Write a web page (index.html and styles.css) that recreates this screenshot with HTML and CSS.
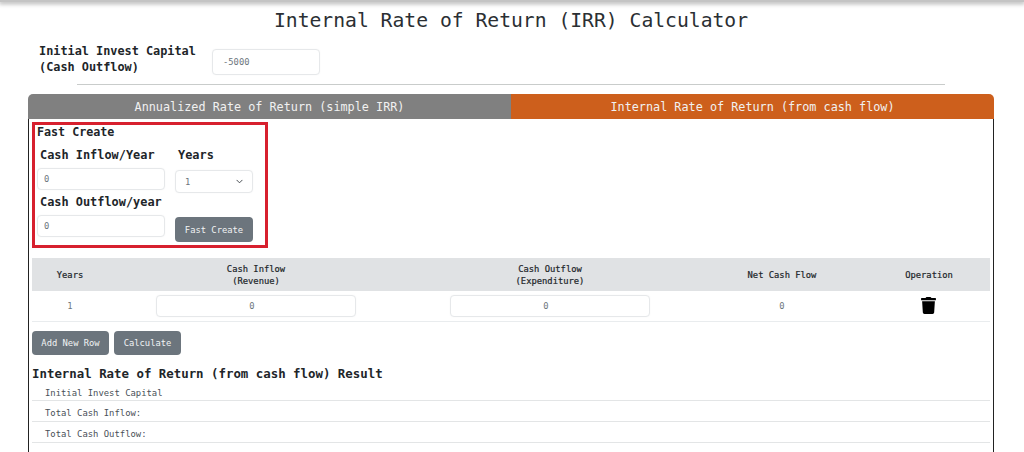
FILE: index.html
```html
<!DOCTYPE html>
<html lang="en">
<head>
<meta charset="utf-8">
<title>IRR Calculator</title>
<link rel="stylesheet" href="styles.css">
</head>
<body>
<div class="topbar"></div>
<h1 class="title">Internal Rate of Return (IRR) Calculator</h1>
<div class="capital">
  <label class="capital-label">Initial Invest Capital<br>(Cash Outflow)</label>
  <input class="field capital-input" type="text" value="-5000">
</div>
<hr class="divider">
<main class="panel">
  <div class="tabs">
    <div class="tab tab-grey">Annualized Rate of Return (simple IRR)</div>
    <div class="tab tab-orange">Internal Rate of Return (from cash flow)</div>
  </div>
  <div class="panel-body">
    <section class="fast">
      <h2 class="fast-title">Fast Create</h2>
      <div class="fast-grid">
        <label class="fast-label">Cash Inflow/Year</label>
        <label class="fast-label">Years</label>
        <input class="field fast-input" type="text" value="0">
        <div class="field fast-select"><span>1</span>
          <svg class="caret" viewBox="0 0 16 16"><path d="M2 5l6 6 6-6" fill="none" stroke="#343a40" stroke-width="2" stroke-linecap="round" stroke-linejoin="round"/></svg>
        </div>
        <label class="fast-label">Cash Outflow/year</label>
        <span></span>
        <input class="field fast-input" type="text" value="0">
        <button class="btn fast-btn" type="button">Fast Create</button>
      </div>
    </section>
    <table class="flow">
      <colgroup>
        <col class="c-years"><col class="c-in"><col class="c-out"><col class="c-net"><col class="c-op">
      </colgroup>
      <thead>
        <tr><th>Years</th><th>Cash Inflow<br>(Revenue)</th><th>Cash Outflow<br>(Expenditure)</th><th>Net Cash Flow</th><th>Operation</th></tr>
      </thead>
      <tbody>
        <tr>
          <td>1</td>
          <td><input class="field row-input" type="text" value="0"></td>
          <td><input class="field row-input" type="text" value="0"></td>
          <td>0</td>
          <td><svg class="trash" viewBox="0 0 448 512"><path d="M432 32H312l-9.4-18.7A24 24 0 0 0 281.1 0H166.8a23.72 23.72 0 0 0-21.4 13.3L136 32H16A16 16 0 0 0 0 48v32a16 16 0 0 0 16 16h416a16 16 0 0 0 16-16V48a16 16 0 0 0-16-16zM53.2 467a48 48 0 0 0 47.9 45h245.8a48 48 0 0 0 47.9-45L416 128H32z"/></svg></td>
        </tr>
      </tbody>
    </table>
    <div class="actions">
      <button class="btn action-add" type="button">Add New Row</button>
      <button class="btn action-calc" type="button">Calculate</button>
    </div>
    <h2 class="result-title">Internal Rate of Return (from cash flow) Result</h2>
    <div class="result-row">Initial Invest Capital</div>
    <div class="result-row">Total Cash Inflow:</div>
    <div class="result-row">Total Cash Outflow:</div>
  </div>
</main>
</body>
</html>
```

FILE: styles.css
```css
* { box-sizing: border-box; }
html, body { margin: 0; padding: 0; height: 452px; overflow: hidden; background: #fff; }
body { font-family: "DejaVu Sans Mono", "Liberation Mono", monospace; color: #212529; }

.topbar { height: 2px; background: #c4c4c4; box-shadow: 0 1px 4px 1px rgba(0,0,0,.3); }

.title { margin: 0; padding: 7px 2px 0 0; height: 42px; font-size: 19.7px; line-height: 24px; font-weight: 400; text-align: center; color: #2b2f33; }

.capital { display: flex; align-items: center; height: 34px; padding-left: 39px; }
.capital-label { width: 173px; margin-top: -4px; font-size: 11.85px; font-weight: 700; line-height: 16px; color: #212529; }

.field { border: 1px solid #e6e8ea; border-radius: 4px; background: #fff; font-family: inherit; color: #6c757d; font-size: 8.8px; outline: none; box-shadow: 0 0 2px rgba(0,0,0,.04); }
.capital-input { width: 108px; height: 26px; margin-top: 1px; padding: 0 10px; }

.divider { margin: 6px 79px 9px 77px; border: 0; border-top: 1px solid #c9cccb; height: 1px; }

.panel { margin: 0 30px 0 28px; }
.tabs { display: flex; height: 25px; border-radius: 5px 5px 0 0; overflow: hidden; }
.tab { display: flex; align-items: center; justify-content: center; font-size: 11.8px; color: #f1f1f1; }
.tab-grey { width: 483px; background: #808080; }
.tab-orange { flex: 1; background: #cd5f1c; }

.panel-body { height: 340px; padding: 3px 3px 0 3px; border-left: 1.5px solid #222; border-right: 1.5px solid #222; }

.fast { width: 236px; height: 126px; border: 3px solid #d7202e; padding: 0 2px; }
.fast-title { margin: 0; font-size: 11.7px; line-height: 14px; font-weight: 700; color: #212529; }
.fast-grid { display: grid; grid-template-columns: 128px 78px; column-gap: 10px; grid-template-rows: 16px 31px 16px 32px; margin-top: 8px; }
.fast-label { padding-left: 3px; font-size: 11.9px; line-height: 16px; font-weight: 700; color: #212529; align-self: start; }
.fast-input { width: 128px; height: 22px; margin-top: 5px; padding: 0 6px; }
.fast-select { display: flex; align-items: center; justify-content: space-between; height: 23px; margin-top: 7px; padding: 0 9px; }
.caret { width: 7px; height: 7px; }
.btn { border: 0; border-radius: 4px; background: #6c757d; color: #f1f3f4; font-family: inherit; font-size: 8.8px; padding: 0; }
.fast-btn { height: 25px; margin-top: 7px; }

.flow { width: 958px; margin-top: 10px; border-collapse: collapse; table-layout: fixed; }
.c-years { width: 76px; }
.c-in { width: 296px; }
.c-out { width: 292px; }
.c-net { width: 172px; }
.c-op { width: 122px; }
.flow th { height: 33px; padding: 0; background: #e0e2e4; font-size: 8.8px; line-height: 12px; font-weight: 400; color: #212529; text-align: center; -webkit-text-stroke: .2px #212529; }
.flow td { height: 30px; padding: 0; border-bottom: 1px solid #e9ecee; font-size: 8.8px; color: #6c757d; text-align: center; }
.row-input { display: block; width: 200px; height: 22px; padding: 0 8px 0 0; text-align: center; margin: 0 auto; }
.trash { display: block; width: 15px; height: 17px; margin: 0 auto; transform: translateX(-1px); fill: #000; }

.actions { display: flex; gap: 5px; margin-top: 9px; }
.action-add { width: 77px; height: 24px; }
.action-calc { width: 67px; height: 24px; }

.result-title { margin: 11px 0 0; font-size: 12.4px; line-height: 16px; font-weight: 700; color: #212529; }
.result-row { width: 958px; height: 21px; padding: 6px 0 0 13px; border-bottom: 1px solid #e3e5e6; font-size: 8.9px; line-height: 13px; color: #495057; }
.result-title + .result-row { height: 19px; padding-top: 5px; }
```
